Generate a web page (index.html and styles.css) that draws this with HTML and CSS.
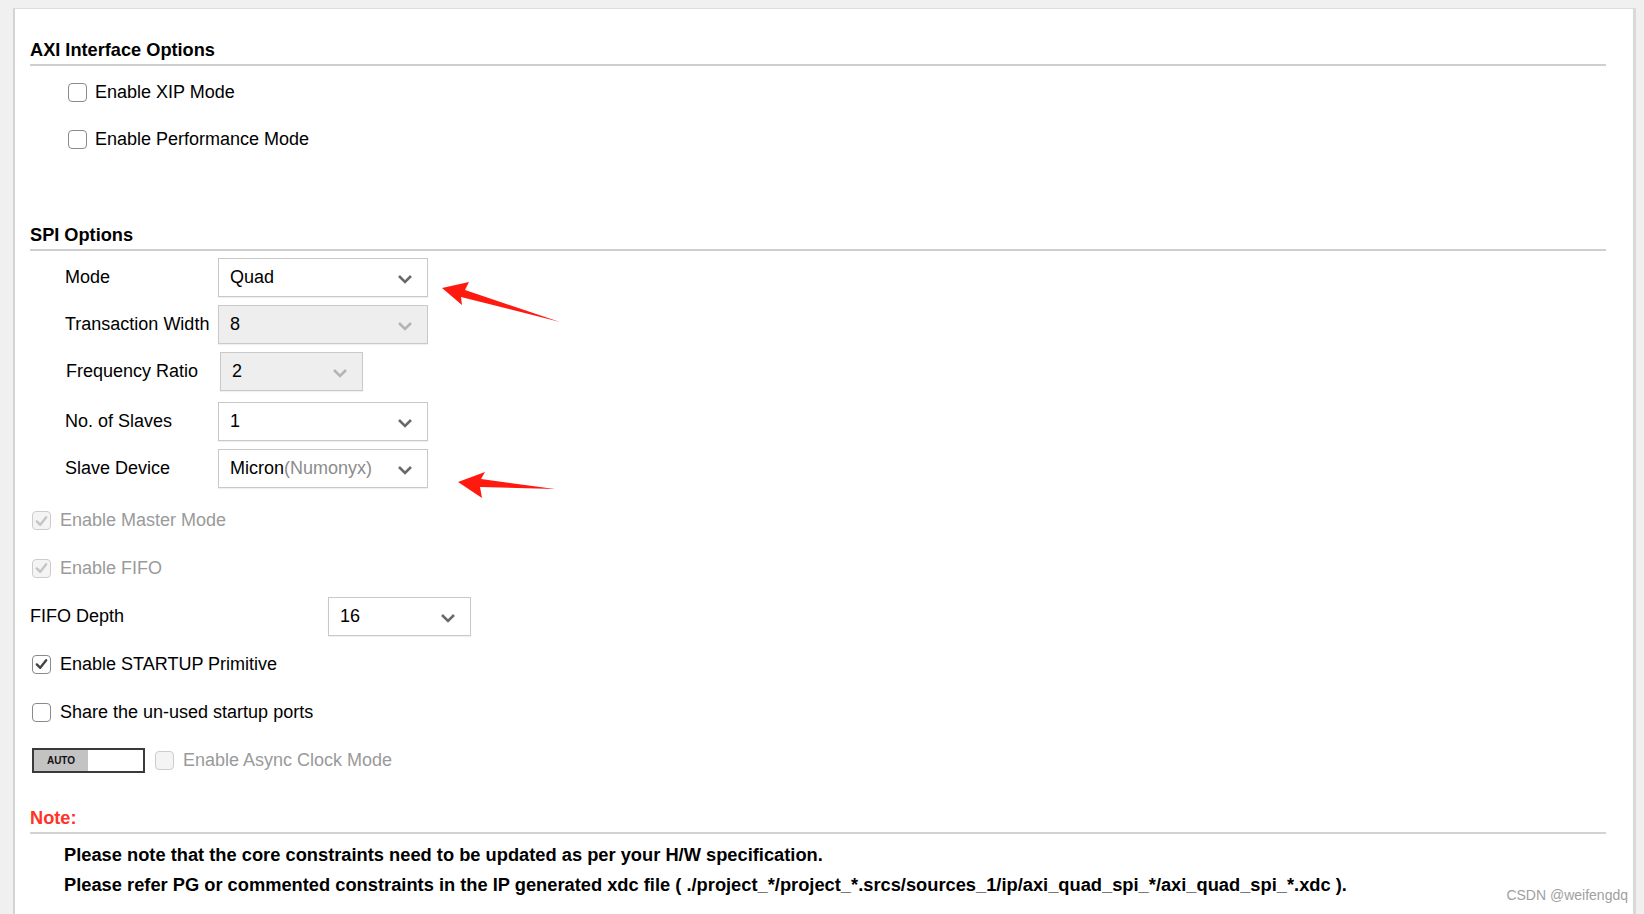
FILE: index.html
```html
<!DOCTYPE html>
<html>
<head>
<meta charset="utf-8">
<link rel="stylesheet" href="styles.css">
</head>
<body>
<div class="panel">
  <div class="section-title first">AXI Interface Options</div>
  <div class="cb-row indent">
    <span class="cb"></span><span class="cb-label">Enable XIP Mode</span>
  </div>
  <div class="cb-row indent">
    <span class="cb"></span><span class="cb-label">Enable Performance Mode</span>
  </div>

  <div class="section-title second">SPI Options</div>
  <div class="field-row first-field">
    <span class="field-label">Mode</span>
    <div class="select"><span class="val">Quad</span><svg class="chev" viewBox="0 0 16 10"><path d="M2 2 L8 8 L14 2"/></svg></div>
  </div>
  <div class="field-row">
    <span class="field-label">Transaction Width</span>
    <div class="select disabled"><span class="val">8</span><svg class="chev" viewBox="0 0 16 10"><path d="M2 2 L8 8 L14 2"/></svg></div>
  </div>
  <div class="field-row">
    <span class="field-label shift">Frequency Ratio</span>
    <div class="select disabled narrow"><span class="val">2</span><svg class="chev" viewBox="0 0 16 10"><path d="M2 2 L8 8 L14 2"/></svg></div>
  </div>
  <div class="field-row gap-more">
    <span class="field-label">No. of Slaves</span>
    <div class="select"><span class="val">1</span><svg class="chev" viewBox="0 0 16 10"><path d="M2 2 L8 8 L14 2"/></svg></div>
  </div>
  <div class="field-row">
    <span class="field-label">Slave Device</span>
    <div class="select"><span class="val">Micron<span class="muted">(Numonyx)</span></span><svg class="chev" viewBox="0 0 16 10"><path d="M2 2 L8 8 L14 2"/></svg></div>
  </div>

  <div class="cb-row spi first-spi">
    <span class="cb checked disabled"><svg viewBox="0 0 20 20"><path d="M4.5 10.5 L8.5 14.5 L15.5 5.5"/></svg></span><span class="cb-label grey">Enable Master Mode</span>
  </div>
  <div class="cb-row spi">
    <span class="cb checked disabled"><svg viewBox="0 0 20 20"><path d="M4.5 10.5 L8.5 14.5 L15.5 5.5"/></svg></span><span class="cb-label grey">Enable FIFO</span>
  </div>

  <div class="field-row fifo">
    <span class="field-label wide">FIFO Depth</span>
    <div class="select narrow"><span class="val">16</span><svg class="chev" viewBox="0 0 16 10"><path d="M2 2 L8 8 L14 2"/></svg></div>
  </div>

  <div class="cb-row spi tall first-startup">
    <span class="cb checked"><svg viewBox="0 0 20 20"><path d="M4.5 10.5 L8.5 14.5 L15.5 5.5"/></svg></span><span class="cb-label">Enable STARTUP Primitive</span>
  </div>
  <div class="cb-row spi tall">
    <span class="cb"></span><span class="cb-label">Share the un-used startup ports</span>
  </div>
  <div class="cb-row spi tall">
    <div class="toggle"><span class="toggle-auto">AUTO</span><span class="toggle-rest"></span></div>
    <span class="cb disabled async"></span><span class="cb-label grey">Enable Async Clock Mode</span>
  </div>

  <div class="section-title note">Note:</div>
  <div class="note-body">
    <p>Please note that the core constraints need to be updated as per your H/W specification.</p>
    <p>Please refer PG or commented constraints in the IP generated xdc file ( ./project_*/project_*.srcs/sources_1/ip/axi_quad_spi_*/axi_quad_spi_*.xdc ).</p>
  </div>
</div>

<svg class="arrow arrow1" viewBox="0 0 130 50" width="130" height="50">
  <polygon points="2,7 29,1 25,9 120,41 21,16 22,24"/>
</svg>
<svg class="arrow arrow2" viewBox="0 0 110 40" width="110" height="40">
  <polygon points="2,12 29,2 25,9 99,19 24,17 26,28"/>
</svg>

<div class="watermark">CSDN @weifengdq</div>
</body>
</html>
```
FILE: styles.css
```css
html, body {
  margin: 0;
  padding: 0;
}
body {
  background: #f0f0f0;
  font-family: "Liberation Sans", Arial, sans-serif;
  color: #000;
  width: 1644px;
  height: 914px;
  overflow: hidden;
  position: relative;
}
.panel {
  margin: 8px 8px 0 13px;
  height: 906px;
  box-sizing: border-box;
  background: #ffffff;
  border-left: 2px solid #d4d4d4;
  border-top: 1px solid #dcdcdc;
  border-right: 3px solid #d9d9d9;
  padding: 30px 27px 0 15px;
}
.section-title {
  font-size: 18.2px;
  font-weight: bold;
  line-height: 22px;
  padding-bottom: 3px;
  border-bottom: 2px solid #cfcfcf;
}
.section-title.second {
  margin-top: 61px;
}
.section-title.note {
  margin-top: 23px;
  color: #ff3326;
  font-size: 18.2px;
  border-bottom-color: #d2d2d2;
}
.cb-row {
  display: flex;
  align-items: center;
  height: 47px;
  font-size: 18px;
}
.cb-row.indent {
  padding-left: 38px;
}
.section-title.first + .cb-row {
  margin-top: 3px;
}
.cb-row.spi {
  padding-left: 2px;
}
.cb-row.first-spi {
  margin-top: 9px;
}
.cb-row.first-spi + .cb-row {
  height: 48px;
}
.cb-row.tall {
  height: 48px;
}
.cb-row.first-startup {
  margin-top: 4px;
}
.cb {
  width: 17px;
  height: 17px;
  border: 1.6px solid #8a8a8a;
  border-radius: 4px;
  background: #fff;
  flex: none;
  margin-right: 8px;
  display: flex;
  align-items: center;
  justify-content: center;
}
.cb-row.spi .cb {
  margin-right: 9px;
}
.cb svg {
  width: 18px;
  height: 18px;
}
.cb svg path {
  fill: none;
  stroke: #444;
  stroke-width: 2.8;
  stroke-linecap: round;
  stroke-linejoin: round;
}
.cb.disabled {
  border-color: #cccccc;
  background: #f4f4f4;
}
.cb.disabled svg path {
  stroke: #c4c4c4;
}
.cb.async {
  margin-left: 10px;
}
.cb-label.grey {
  color: #9a9a9a;
}
.field-row {
  display: flex;
  align-items: center;
  height: 39px;
  margin-top: 8px;
  padding-left: 35px;
  font-size: 18px;
}
.field-row.first-field {
  margin-top: 7px;
}
.field-row.gap-more {
  margin-top: 11px;
}
.field-row.fifo {
  padding-left: 0;
  margin-top: 5px;
}
.field-label {
  width: 153px;
  flex: none;
}
.field-label.shift {
  margin-left: 1px;
  width: 154px;
}
.field-label.wide {
  width: 298px;
}
.select {
  width: 210px;
  height: 39px;
  box-sizing: border-box;
  border: 1.5px solid #c9c9c9;
  box-shadow: 0 1px 1px rgba(0,0,0,0.06);
  background: #fff;
  display: flex;
  align-items: center;
  justify-content: space-between;
  padding: 0 14px 0 11px;
}
.select.narrow {
  width: 143px;
}
.select.disabled {
  background: #eeeeee;
}
.select .val {
  font-size: 18px;
}
.muted {
  color: #8c8c8c;
}
.chev {
  width: 16px;
  height: 10px;
  margin-top: 2px;
}
.chev path {
  fill: none;
  stroke: #6a6a6a;
  stroke-width: 2.6;
}
.select.disabled .chev path {
  stroke: #b4b4b4;
}
.toggle {
  display: flex;
  width: 113px;
  height: 25px;
  box-sizing: border-box;
  border: 2px solid #3a3a3a;
  flex: none;
}
.toggle-auto {
  width: 54px;
  background: #c3c3c3;
  font-size: 10px;
  font-weight: bold;
  display: flex;
  align-items: center;
  justify-content: center;
  color: #111;
}
.toggle-rest {
  flex: 1;
  background: #fff;
}
.note-body {
  padding-left: 34px;
  margin-top: 6px;
}
.note-body p {
  margin: 0;
  line-height: 30px;
  font-size: 18.3px;
  font-weight: bold;
}
.arrow {
  position: absolute;
}
.arrow polygon {
  fill: #ff1a0f;
}
.arrow1 {
  left: 440px;
  top: 281px;
}
.arrow2 {
  left: 456px;
  top: 470px;
}
.watermark {
  position: absolute;
  right: 16px;
  top: 887px;
  font-size: 14px;
  color: #a0a0a0;
}
```
